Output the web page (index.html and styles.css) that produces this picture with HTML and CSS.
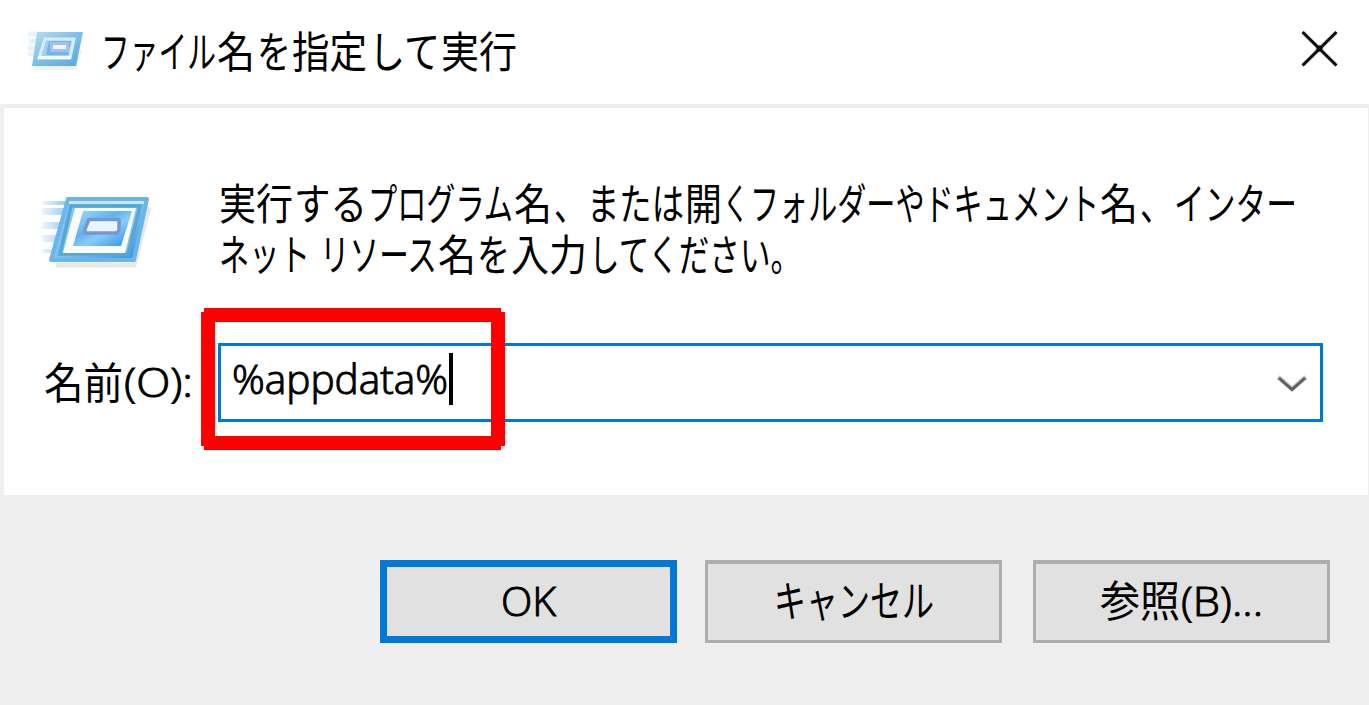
FILE: index.html
```html
<!DOCTYPE html>
<html lang="ja">
<head>
<meta charset="utf-8">
<title>ファイル名を指定して実行</title>
<link rel="stylesheet" href="styles.css">
</head>
<body>
<div class="dialog">
  <header class="titlebar">
    <svg class="title-icon" viewBox="0 0 57 40" width="57" height="40">
      <defs>
        <linearGradient id="small" x1="0" y1="0" x2="1" y2="1"><stop offset="0" stop-color="#b7ddf2"/><stop offset=".5" stop-color="#7cbfe9"/><stop offset="1" stop-color="#54a6e5"/></linearGradient>
      </defs>
      <path d="M0 2h10M1 9h8M0 16h8M0 22h6" stroke="#e6f3fc" stroke-width="5"/>
      <path d="M7 36h40l5-18" fill="none" stroke="#f3f2f2" stroke-width="4"/>
      <path d="M9 0H55L48 34H4Z" fill="url(#small)"/>
      <path d="M17 7H46L42 26H11Z" fill="#a0d0f3" stroke="#d9eefb" stroke-width="3"/>
      <path d="M10 25.500H43" stroke="#f6faff" stroke-width="3"/>
      <path d="M21 9H43L40 23H18Z" fill="#70b6ec"/>
      <rect x="23.500" y="11.500" width="16" height="7" fill="#f3f5ff" stroke="#a5c0ee" stroke-width="3"/>
    </svg>
    <svg class="title-text" width="430" height="60">
      <text y="44"><tspan x="0" textLength="115" lengthAdjust="spacingAndGlyphs">ファイル</tspan><tspan x="116" textLength="38" lengthAdjust="spacingAndGlyphs">名</tspan><tspan x="156" textLength="34" lengthAdjust="spacingAndGlyphs">を</tspan><tspan x="191" textLength="75" lengthAdjust="spacingAndGlyphs">指定</tspan><tspan x="268" textLength="71" lengthAdjust="spacingAndGlyphs">して</tspan><tspan x="340" textLength="76" lengthAdjust="spacingAndGlyphs">実行</tspan></text>
    </svg>
    <button class="close" aria-label="閉じる">
      <svg width="37" height="36" viewBox="0 0 37 36"><path d="M2 1.500L35 34M35 1.500L2 34" stroke="#d2d2d2" stroke-width="4.500"/><path d="M1.500 1L35.500 34.500M35.500 1L1.500 34.500" stroke="#080808" stroke-width="2.800"/><rect x="15.500" y="14.500" width="6" height="6" fill="#080808"/></svg>
    </button>
  </header>

  <main class="content">
    <div class="intro">
      <svg class="run-icon" width="112" height="76" viewBox="0 0 112 76">
        <defs>
          <linearGradient id="frame" x1="0" y1="0" x2="1" y2="1"><stop offset="0" stop-color="#8dc6ed"/><stop offset=".55" stop-color="#79bfe9"/><stop offset="1" stop-color="#318fe3"/></linearGradient>
          <linearGradient id="inner" x1="0" y1="0" x2="1" y2="1"><stop offset="0" stop-color="#a3dcff"/><stop offset=".4" stop-color="#61b4ef"/><stop offset=".58" stop-color="#86ccfa"/><stop offset="1" stop-color="#2c8fe3"/></linearGradient>
          <linearGradient id="speed"><stop offset="0" stop-color="#edf6ff"/><stop offset="1" stop-color="#9ccaf1"/></linearGradient>
        </defs>
        <path d="M0 4h24v4H0zM0 11h24v7H0zM0 25h20v7H0zM0 38h18v7H0zM0 52h13v4H0z" fill="url(#speed)"/>
        <path d="M14 68H92L107 10" fill="none" stroke="#e9e8e9" stroke-width="5"/>
        <path d="M26 2H105L92 63H9Z" fill="url(#frame)" stroke="#6ab5ec" stroke-width="4" stroke-linejoin="round"/>
        <path d="M27 5.500H102" stroke="#c7e7fd" stroke-width="3"/>
        <path d="M29 9H98L86 57H18Z" fill="#8bc7e8" stroke="#55a8d4" stroke-width="3.500"/>
        <path d="M33 11H94L83 56H21Z" fill="#fafafa"/>
        <path d="M41 14H90L79 49H31Z" fill="url(#inner)"/>
        <path d="M47 22.500H77V33L75 36H43V32Z" fill="#e8f6ff" stroke="#7a96d0" stroke-width="3.500" stroke-linejoin="round"/>
      </svg>
      <svg class="description" width="1100" height="106">
        <text y="43"><tspan x="0" textLength="74" lengthAdjust="spacingAndGlyphs">実行</tspan><tspan x="75" textLength="73" lengthAdjust="spacingAndGlyphs">する</tspan><tspan x="149" textLength="145" lengthAdjust="spacingAndGlyphs">プログラム</tspan><tspan x="295" textLength="38" lengthAdjust="spacingAndGlyphs">名</tspan><tspan x="335" textLength="32" lengthAdjust="spacingAndGlyphs">、</tspan><tspan x="368" textLength="97" lengthAdjust="spacingAndGlyphs">または</tspan><tspan x="466" textLength="37" lengthAdjust="spacingAndGlyphs">開</tspan><tspan x="504" textLength="26" lengthAdjust="spacingAndGlyphs">く</tspan><tspan x="531" textLength="349" lengthAdjust="spacingAndGlyphs">フォルダーやドキュメント</tspan><tspan x="881" textLength="38" lengthAdjust="spacingAndGlyphs">名</tspan><tspan x="921" textLength="32" lengthAdjust="spacingAndGlyphs">、</tspan><tspan x="955" textLength="123" lengthAdjust="spacingAndGlyphs">インター</tspan></text>
        <text y="94"><tspan x="0" textLength="91" lengthAdjust="spacingAndGlyphs">ネット</tspan><tspan x="101" textLength="117" lengthAdjust="spacingAndGlyphs">リソース</tspan><tspan x="219" textLength="38" lengthAdjust="spacingAndGlyphs">名</tspan><tspan x="258" textLength="33" lengthAdjust="spacingAndGlyphs">を</tspan><tspan x="292" textLength="76" lengthAdjust="spacingAndGlyphs">入力</tspan><tspan x="370" textLength="212" lengthAdjust="spacingAndGlyphs">してください。</tspan></text>
      </svg>
    </div>

    <div class="field-row">
      <svg class="label" width="174" height="78">
        <text y="56"><tspan x="0" textLength="79" lengthAdjust="spacingAndGlyphs">名前</tspan><tspan class="latin" x="80" y="54" textLength="69" lengthAdjust="spacingAndGlyphs">(O):</tspan></text>
      </svg>
      <div class="combo">
        <svg class="value" width="250" height="72"><text class="latin" x="-1" y="48" textLength="216" lengthAdjust="spacingAndGlyphs">%appdata%</text><rect x="216" y="7" width="4" height="52"/></svg>
        <svg class="chevron" width="32" height="20" viewBox="0 0 32 20"><path d="M2 2L16 14L30 2" fill="none" stroke="#c6c6c6" stroke-width="4.500"/><path d="M3 3L16 14.500L29 3" fill="none" stroke="#606060" stroke-width="3"/></svg>
        <svg class="highlight" width="304" height="142" viewBox="0 0 304 142"><path fill="red" fill-rule="evenodd" d="M3 0H300V4H304V138H300V142H3V138H0V4H3ZM14 14V128H290V14Z"/></svg>
      </div>
    </div>
  </main>

  <footer class="actions">
    <button class="button primary"><svg width="60" height="60"><text class="latin" x="2" y="44" textLength="55" lengthAdjust="spacingAndGlyphs">OK</text></svg></button>
    <button class="button"><svg width="160" height="60"><text x="0" y="45" textLength="160" lengthAdjust="spacingAndGlyphs">キャンセル</text></svg></button>
    <button class="button"><svg width="166" height="60"><text y="45"><tspan x="1" textLength="80" lengthAdjust="spacingAndGlyphs">参照</tspan><tspan class="latin" x="82" y="44" textLength="82" lengthAdjust="spacingAndGlyphs">(B)...</tspan></text></svg></button>
  </footer>
</div>
</body>
</html>
```
FILE: styles.css
```css
* { box-sizing: border-box; }
body { margin: 0; background: #efefef; }
svg { display: block; flex: none; overflow: visible; }
text { font: 400 43px "Noto Sans CJK JP", "Noto Sans", sans-serif; fill: #000; white-space: pre; }
.latin { font: 300 40px "Open Sans", "Noto Sans", sans-serif; stroke: #000; stroke-width: 1px; }
button { margin: 0; padding: 0; border: 0; background: none; }
.dialog { width: 1369px; height: 705px; display: flex; flex-direction: column; overflow: hidden; background: #efefef; }
.titlebar { height: 104px; flex: none; display: flex; align-items: flex-start; background: #fff; padding: 24px 31px 0 28px; }
.title-icon { margin-top: 8px; }
.title-text { margin-left: 16px; }
.close { margin: 7px 0 0 auto; }
.content { height: 387px; flex: none; margin: 4px 1px 0 4px; background: #fff; padding: 69px 45px 0 38px; }
.intro { display: flex; height: 166px; }
.run-icon { margin-top: 20px; }
.description { margin-left: 65px; }
.field-row { display: flex; }
.combo { position: relative; display: flex; justify-content: space-between; width: 1105px; height: 79px; border: 3px solid #0078d7; padding: 0 12px; }
.label { margin-left: 2px; }
.chevron { margin-top: 29px; }
.highlight { position: absolute; left: -20px; top: -38px; }
.actions { display: flex; padding: 65px 39px 0 380px; }
.button { display: flex; align-items: center; justify-content: center; width: 297px; height: 83px; border: 4px solid #adadad; border-width: 4px 3px 3px; background: #e1e1e1; }
.button + .button { margin-left: 28px; }
.button + .button + .button { margin-left: 31px; }
.button.primary { border: 7px solid #0078d7; }
```
